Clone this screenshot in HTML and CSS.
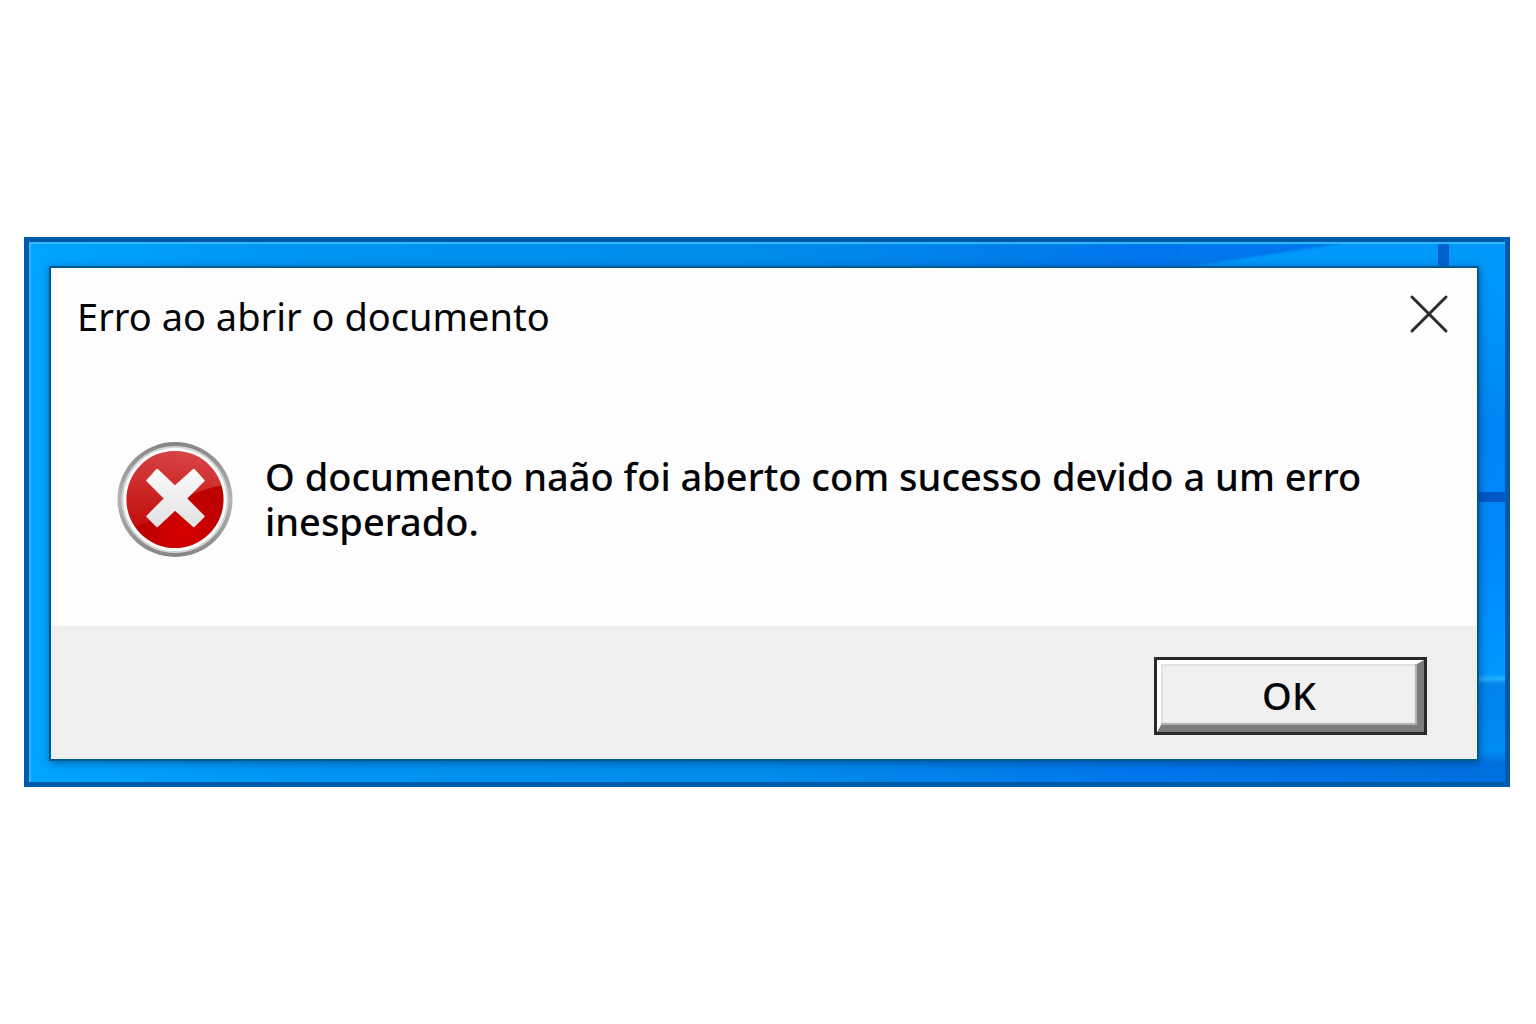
FILE: index.html
```html
<!DOCTYPE html>
<html lang="pt-BR">
<head>
    <meta charset="UTF-8">
    <meta name="viewport" content="width=device-width, initial-scale=1.0">
    <title>Erro ao abrir o documento</title>
    <link rel="stylesheet" href="styles.css">
</head>
<body>
    <main class="desktop">
        <section class="dialog" role="alertdialog" aria-labelledby="titulo" aria-describedby="mensagem">
            <header class="dialog-header">
                <h1 id="titulo">Erro ao abrir o documento</h1>
                <button class="btn-close" type="button" aria-label="Fechar">
                    <svg viewBox="0 0 40 40" aria-hidden="true">
                        <path d="M3 3 L37 37 M37 3 L3 37"/>
                    </svg>
                </button>
            </header>

            <div class="dialog-body">
                <svg class="icon-error" viewBox="0 0 116 116" aria-hidden="true">
                    <defs>
                        <linearGradient id="ring" x1="0" y1="0" x2="0" y2="1">
                            <stop offset="0" stop-color="#858585"/>
                            <stop offset=".5" stop-color="#b4b4b4"/>
                            <stop offset="1" stop-color="#858585"/>
                        </linearGradient>
                        <radialGradient id="red" cx=".6" cy=".85" r=".8">
                            <stop offset="0" stop-color="#d80000"/>
                            <stop offset=".5" stop-color="#bd0000"/>
                            <stop offset="1" stop-color="#b80404"/>
                        </radialGradient>
                        <linearGradient id="shine" x1=".6" y1="0" x2=".4" y2="1">
                            <stop offset="0" stop-color="#ff9090" stop-opacity=".5"/>
                            <stop offset="1" stop-color="#ff9090" stop-opacity=".1"/>
                        </linearGradient>
                        <linearGradient id="cross" x1="0" y1="0" x2="0" y2="1">
                            <stop offset="0" stop-color="#fafafa"/>
                            <stop offset="1" stop-color="#e2e2e4"/>
                        </linearGradient>
                        <clipPath id="disc"><circle cx="58" cy="58" r="49"/></clipPath>
                    </defs>
                    <circle cx="58" cy="58" r="58" fill="url(#ring)"/>
                    <circle cx="58" cy="58" r="54" fill="#d4d4d4"/>
                    <circle cx="58" cy="58" r="52" fill="#fdfdfd"/>
                    <circle cx="58" cy="58" r="49" fill="url(#red)"/>
                    <path clip-path="url(#disc)" fill="url(#shine)" d="M0 0 H116 V42 C84 46 62 58 50 68 C38 78 28 84 12 86 H0 Z"/>
                    <path fill="url(#cross)" stroke="url(#cross)" stroke-width="2" stroke-linejoin="round" d="M40 28 L58 45 L77 28 L87 39 L69 57 L87 75 L77 85 L58 68 L40 85 L30 75 L48 57 L30 39 Z"/>
                </svg>
                <p id="mensagem">O documento naão foi aberto com sucesso devido a um erro inesperado.</p>
            </div>

            <footer class="dialog-footer">
                <button class="btn-ok" type="button">OK</button>
            </footer>
        </section>
    </main>
</body>
</html>
```
FILE: styles.css
```css
*{
    box-sizing: border-box;
}

body{
    margin: 0;
    min-height: 100vh;
    padding: 24px 26px 24px 24px;
    display: flex;
    align-items: center;
    background: #fff;
    color: #050508;
    font-family: "Noto Sans", "Open Sans", sans-serif;
}

/* papel de parede azul em volta da janela */
.desktop{
    flex: 1;
    padding: 24px 26px 21px 20px;
    border: 5px solid #0059a9;
    box-shadow: inset 2px 2px 1px #35b9ff;
    background:
        linear-gradient(#0062d0, #0062d0) right 56px top 0 / 11px 26px no-repeat,
        linear-gradient(#0058c8, #0058c8) right 0 top 250px / 28px 10px no-repeat,
        linear-gradient(to bottom right, #0077ec 50%, #0098fb 58%) right 165px top 0 / 160px 24px no-repeat,
        linear-gradient(#0098fb, #0098fb) right 0 top 0 / 165px 26px no-repeat,
        linear-gradient(#009dff, #0086f4 35%, #0089fa 60%, #0098ff 83%, #22b0ff 84%, #0084ee 85%, #008cf2 98%, #0073e4) right 0 top 0 / 28px 520px no-repeat,
        linear-gradient(to right, #00a5ff, #0094f2 20%, #008ceb 50%, #0076ec 75%, #0070e0);
}

.dialog{
    border: 2px solid #005a92;
    background: #fdfdfd;
    box-shadow: 1px 2px 8px rgba(0,40,90,.5);
}

.dialog-header{
    display: flex;
    justify-content: space-between;
    align-items: flex-start;
    padding: 16px 28px 16px 26px;
}
.dialog-header h1{
    margin: 0;
    font-size: 38px;
    font-weight: 400;
    line-height: 64px;
}

.btn-close{
    width: 40px;
    height: 60px;
    padding: 0;
    border: 0;
    background: none;
}
.btn-close svg{
    display: block;
    width: 40px;
    fill: none;
    stroke: #2c2c2c;
    stroke-width: 3;
    stroke-linecap: round;
}

.dialog-body{
    display: flex;
    align-items: center;
    gap: 32px;
    padding: 78px 66px 69px;
}
.dialog-body p{
    margin: 0;
    padding-bottom: 2px;
    font-size: 38px;
    font-weight: 500;
    line-height: 45px;
}
.icon-error{
    flex: none;
    width: 116px;
    height: 115px;
}

.dialog-footer{
    display: flex;
    justify-content: flex-end;
    padding: 34px 53px 27px;
    background: #efefef;
}

.btn-ok{
    width: 267px;
    height: 72px;
    padding: 0;
    border-style: solid;
    border-width: 4px 7px 7px 4px;
    border-color: #fff #7c7c7c #7c7c7c #fff;
    background: #f0f0f0;
    box-shadow: 0 0 0 3px #292929, inset -2px -2px 1px #b0b0b0, inset 2px 2px 1px #e2e2e2;
    color: inherit;
    font: 500 38px "Noto Sans", "Open Sans", sans-serif;
}
```
